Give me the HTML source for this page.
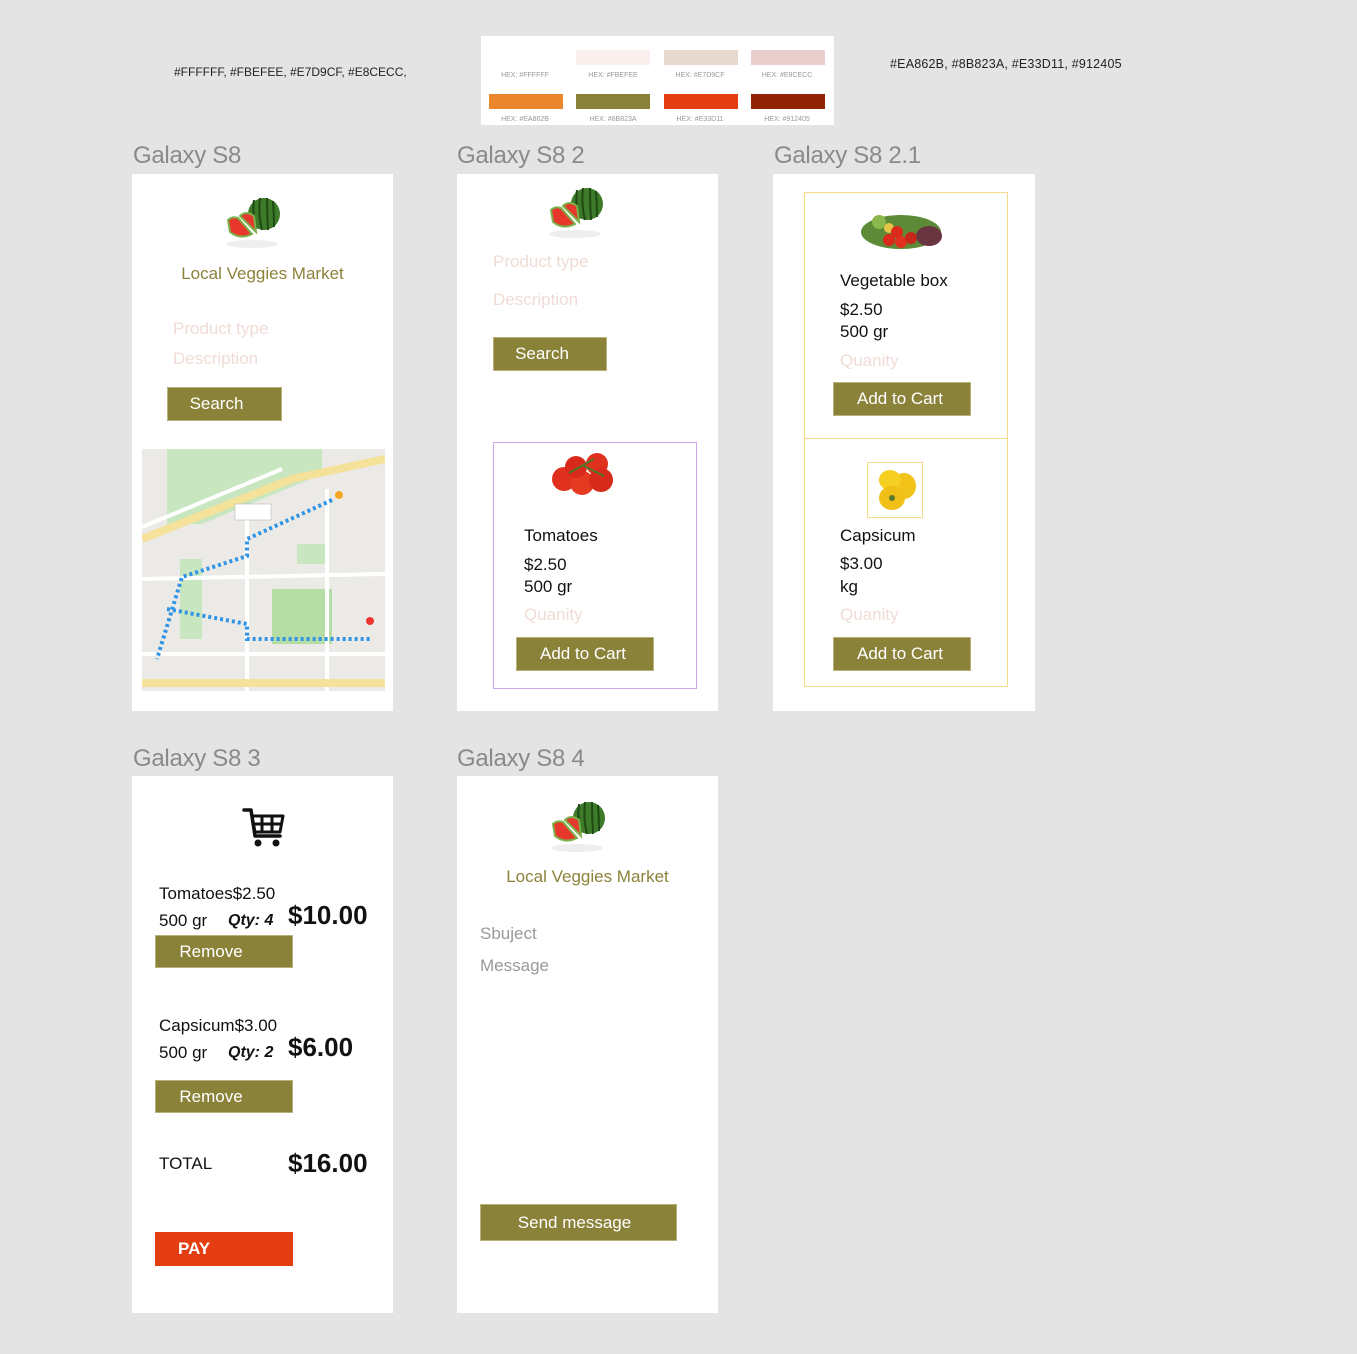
<!DOCTYPE html>
<html><head><meta charset="utf-8"><style>
*{margin:0;padding:0;box-sizing:border-box}
body{width:1357px;height:1354px;background:#e4e4e4;position:relative;overflow:hidden;font-family:"Liberation Sans",sans-serif;color:#111}
.a{position:absolute;white-space:nowrap}
.card{position:absolute;background:#fff}
.title{position:absolute;font-size:24px;color:#8a8a8a;line-height:1;letter-spacing:-0.3px}
.btn{position:absolute;background:#8b823a;color:#fff;font-size:17px;text-align:center;border:1px solid #b8b27a}
.ph{color:#f0dcd6;font-size:17px}
.olive{color:#8b823a}
.t17{font-size:17px}
.sw{position:absolute;width:74px;height:15px}
.hx{position:absolute;font-size:7px;color:#999;width:88px;text-align:center}
</style></head><body>

<div class="a" style="left:174px;top:65px;font-size:12px;color:#222">#FFFFFF, #FBEFEE, #E7D9CF, #E8CECC,</div>
<div class="a" style="left:890px;top:57px;font-size:12.5px;color:#222;letter-spacing:0.2px">#EA862B, #8B823A, #E33D11, #912405</div>

<div class="card" style="left:481px;top:36px;width:353px;height:89px">
<div class="sw" style="left:95px;top:14px;background:#fbefee"></div>
<div class="sw" style="left:183px;top:14px;background:#e7d9cf"></div>
<div class="sw" style="left:270px;top:14px;background:#e8cecc"></div>
<div class="hx" style="left:0;top:36px">HEX: #FFFFFF</div>
<div class="hx" style="left:88px;top:36px">HEX: #FBEFEE</div>
<div class="hx" style="left:175px;top:36px">HEX: #E7D9CF</div>
<div class="hx" style="left:262px;top:36px">HEX: #E8CECC</div>
<div class="sw" style="left:8px;top:58px;background:#ea862b"></div>
<div class="sw" style="left:95px;top:58px;background:#8b823a"></div>
<div class="sw" style="left:183px;top:58px;background:#e33d11"></div>
<div class="sw" style="left:270px;top:58px;background:#912405"></div>
<div class="hx" style="left:0;top:80px">HEX: #EA862B</div>
<div class="hx" style="left:88px;top:80px">HEX: #8B823A</div>
<div class="hx" style="left:175px;top:80px">HEX: #E33D11</div>
<div class="hx" style="left:262px;top:80px">HEX: #912405</div>
</div>

<div class="title" style="left:133px;top:144px">Galaxy S8</div>
<div class="title" style="left:457px;top:144px">Galaxy S8 2</div>
<div class="title" style="left:774px;top:144px">Galaxy S8 2.1</div>
<div class="title" style="left:133px;top:747px">Galaxy S8 3</div>
<div class="title" style="left:457px;top:747px">Galaxy S8 4</div>

<svg width="0" height="0" style="position:absolute"><defs>
<g id="wm">
<ellipse cx="30" cy="52" rx="26" ry="4" fill="#eee"/>
<circle cx="42" cy="22" r="16" fill="#3d7a2a"/>
<path d="M32 8 Q30 22 34 37 M38 6 Q36 22 40 38 M45 6 Q45 22 46 38 M51 9 Q52 22 52 35" stroke="#1f4a14" stroke-width="2" fill="none"/>
<path d="M6 28 Q10 24 16 26 L30 42 Q18 48 8 40 Z" fill="#e8382c" stroke="#7bb04a" stroke-width="2"/>
<path d="M18 24 Q24 18 32 24 L34 40 Z" fill="#e43a2d" stroke="#7bb04a" stroke-width="2"/>
</g>
</defs></svg>

<div class="card" style="left:132px;top:174px;width:261px;height:537px">
<svg class="a" style="left:90px;top:18px" width="64" height="58" viewBox="0 0 64 58"><use href="#wm"/></svg>
<div class="a olive" style="left:0;width:261px;text-align:center;top:90px;font-size:17px">Local Veggies Market</div>
<div class="a ph" style="left:41px;top:145px">Product type</div>
<div class="a ph" style="left:41px;top:175px">Description</div>
<div class="btn" style="left:35px;top:213px;width:115px;height:34px;line-height:32px;padding-right:16px">Search</div>
<svg class="a" style="left:10px;top:275px" width="243" height="242" viewBox="0 0 243 242">
<rect width="243" height="242" fill="#eceae6"/>
<polygon points="25,0 180,0 180,25 60,75 25,75" fill="#c8e6c0"/>
<path d="M0 90 L150 30 L243 10" stroke="#f4e19a" stroke-width="8" fill="none"/>
<path d="M0 78 L140 20" stroke="#fff" stroke-width="4" fill="none"/>
<rect x="130" y="140" width="60" height="55" fill="#b4dea5"/>
<rect x="38" y="110" width="22" height="80" fill="#c8e6c0"/>
<rect x="155" y="95" width="30" height="20" fill="#c8e6c0"/>
<path d="M0 130 L243 125 M0 205 L243 205 M105 60 L105 242 M185 40 L185 242" stroke="#fff" stroke-width="4" fill="none"/>
<rect x="0" y="230" width="243" height="8" fill="#f4e19a"/>
<path d="M190 51 L105 90 L105 107 L40 128 L15 210 M25 160 L105 175 L105 190 L230 190" stroke="#2f94e5" stroke-width="4" stroke-dasharray="3 3" fill="none"/>
<rect x="93" y="55" width="36" height="16" fill="#fff" stroke="#aaa" stroke-width="0.5"/>
<circle cx="228" cy="172" r="4" fill="#e33"/>
<circle cx="197" cy="46" r="4" fill="#f5a623"/>
</svg>
</div>

<div class="card" style="left:457px;top:174px;width:261px;height:537px">
<svg class="a" style="left:88px;top:8px" width="64" height="58" viewBox="0 0 64 58"><use href="#wm"/></svg>
<div class="a ph" style="left:36px;top:78px">Product type</div>
<div class="a ph" style="left:36px;top:116px">Description</div>
<div class="btn" style="left:36px;top:163px;width:114px;height:34px;line-height:32px;padding-right:16px">Search</div>
<div class="a" style="left:36px;top:268px;width:204px;height:247px;border:1px solid #c9a6e6"></div>
<svg class="a" style="left:92px;top:277px" width="70" height="44" viewBox="0 0 70 44">
<circle cx="15" cy="28" r="12" fill="#e0301e"/><circle cx="33" cy="32" r="12" fill="#e53a22"/><circle cx="27" cy="16" r="11" fill="#d9291a"/><circle cx="48" cy="13" r="11" fill="#e0301e"/><circle cx="52" cy="29" r="12" fill="#d72a1b"/>
<path d="M20 22 L45 8 M35 15 L55 25" stroke="#4a7a2a" stroke-width="2"/></svg>
<div class="a t17" style="left:67px;top:352px">Tomatoes</div>
<div class="a t17" style="left:67px;top:381px">$2.50</div>
<div class="a t17" style="left:67px;top:403px">500 gr</div>
<div class="a ph" style="left:67px;top:431px">Quanity</div>
<div class="btn" style="left:59px;top:463px;width:138px;height:34px;line-height:32px;padding-right:4px">Add to Cart</div>
</div>

<div class="card" style="left:773px;top:174px;width:262px;height:537px">
<div class="a" style="left:31px;top:18px;width:204px;height:495px;border:1px solid #f7d98a"></div>
<div class="a" style="left:31px;top:264px;width:204px;height:1px;background:#f7d98a"></div>
<svg class="a" style="left:86px;top:34px" width="84" height="44" viewBox="0 0 84 44">
<ellipse cx="42" cy="24" rx="40" ry="17" fill="#5d8a36"/><circle cx="20" cy="14" r="7" fill="#8ab84a"/><circle cx="30" cy="20" r="5" fill="#e8c54a"/>
<circle cx="30" cy="32" r="6" fill="#d92a1a"/><circle cx="42" cy="34" r="6" fill="#e0301e"/><circle cx="38" cy="24" r="6" fill="#d92a1a"/><circle cx="52" cy="30" r="6" fill="#c9261a"/>
<ellipse cx="70" cy="28" rx="13" ry="10" fill="#6a3540"/></svg>
<div class="a t17" style="left:67px;top:97px">Vegetable box</div>
<div class="a t17" style="left:67px;top:126px">$2.50</div>
<div class="a t17" style="left:67px;top:148px">500 gr</div>
<div class="a ph" style="left:67px;top:177px">Quanity</div>
<div class="btn" style="left:60px;top:208px;width:138px;height:34px;line-height:32px;padding-right:4px">Add to Cart</div>
<div class="a" style="left:94px;top:288px;width:56px;height:56px;border:1px solid #f7d98a"></div>
<svg class="a" style="left:99px;top:292px" width="48" height="48" viewBox="0 0 48 48">
<ellipse cx="32" cy="20" rx="12" ry="13" fill="#f2c41a"/><ellipse cx="18" cy="14" rx="11" ry="10" fill="#f5cf22"/><ellipse cx="20" cy="32" rx="13" ry="12" fill="#f0c018"/><circle cx="20" cy="32" r="3" fill="#5a7a2a"/></svg>
<div class="a t17" style="left:67px;top:352px">Capsicum</div>
<div class="a t17" style="left:67px;top:380px">$3.00</div>
<div class="a t17" style="left:67px;top:403px">kg</div>
<div class="a ph" style="left:67px;top:431px">Quanity</div>
<div class="btn" style="left:60px;top:463px;width:138px;height:34px;line-height:32px;padding-right:4px">Add to Cart</div>
</div>

<div class="card" style="left:132px;top:776px;width:261px;height:537px">
<svg class="a" style="left:110px;top:30px" width="44" height="42" viewBox="0 0 44 42">
<path d="M2 4 L9 4 L13 30 L38 30" stroke="#111" stroke-width="3.5" fill="none" stroke-linecap="round" stroke-linejoin="round"/>
<path d="M10 10 L41 10 L38 26 L13 26 Z M20 10 L20 26 M30 10 L30 26 M11 18 L40 18" stroke="#111" stroke-width="3" fill="none" stroke-linejoin="round"/>
<circle cx="16" cy="37" r="3.5" fill="#111"/><circle cx="34" cy="37" r="3.5" fill="#111"/></svg>
<div class="a t17" style="left:27px;top:108px">Tomatoes$2.50</div>
<div class="a t17" style="left:27px;top:135px">500 gr</div>
<div class="a" style="left:96px;top:136px;font-size:16px;font-weight:bold;font-style:italic">Qty: 4</div>
<div class="a" style="left:156px;top:124px;font-size:26px;font-weight:bold">$10.00</div>
<div class="btn" style="left:23px;top:159px;width:138px;height:33px;line-height:31px;padding-right:26px">Remove</div>
<div class="a t17" style="left:27px;top:240px">Capsicum$3.00</div>
<div class="a t17" style="left:27px;top:267px">500 gr</div>
<div class="a" style="left:96px;top:268px;font-size:16px;font-weight:bold;font-style:italic">Qty: 2</div>
<div class="a" style="left:156px;top:256px;font-size:26px;font-weight:bold">$6.00</div>
<div class="btn" style="left:23px;top:304px;width:138px;height:33px;line-height:31px;padding-right:26px">Remove</div>
<div class="a" style="left:27px;top:378px;font-size:17px">TOTAL</div>
<div class="a" style="left:156px;top:372px;font-size:26px;font-weight:bold">$16.00</div>
<div class="a" style="left:23px;top:456px;width:138px;height:34px;background:#e33d11;color:#fff;font-weight:bold;font-size:17px;line-height:34px;padding-left:23px">PAY</div>
</div>

<div class="card" style="left:457px;top:776px;width:261px;height:537px">
<svg class="a" style="left:90px;top:20px" width="64" height="58" viewBox="0 0 64 58"><use href="#wm"/></svg>
<div class="a olive" style="left:0;width:261px;text-align:center;top:91px;font-size:17px">Local Veggies Market</div>
<div class="a" style="left:23px;top:148px;font-size:17px;color:#999">Sbuject</div>
<div class="a" style="left:23px;top:180px;font-size:17px;color:#999">Message</div>
<div class="btn" style="left:23px;top:428px;width:197px;height:37px;line-height:35px;padding-right:8px">Send message</div>
</div>

</body></html>
